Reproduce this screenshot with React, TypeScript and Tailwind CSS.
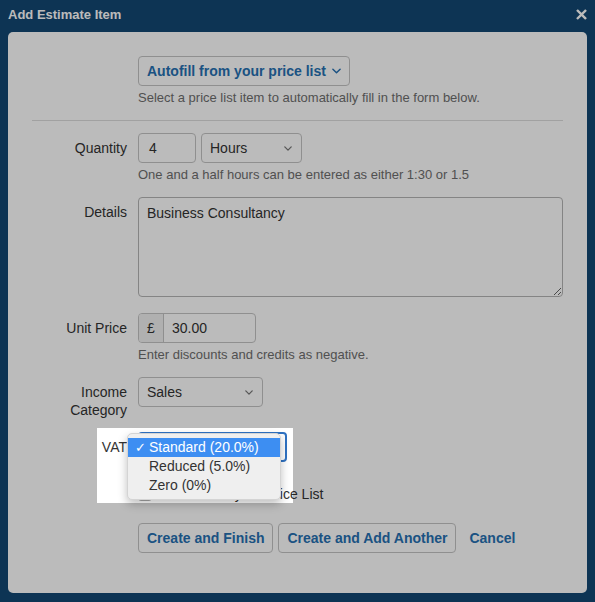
import React from 'react';

interface RowProps {
  label?: React.ReactNode;
  className?: string;
  children: React.ReactNode;
}

function Row({ label, className = '', children }: RowProps) {
  return (
    <div className={`flex ${className}`}>
      <div className="w-[95px] shrink-0 pt-[6px] text-right leading-[18px] text-[#333]">{label}</div>
      <div className="ml-[11px] min-w-0 flex-1">{children}</div>
    </div>
  );
}

function Chevron({ className }: { className?: string }) {
  return (
    <svg viewBox="0 0 10 6" className={className} fill="none" stroke="currentColor" strokeWidth="1.6" strokeLinecap="round" strokeLinejoin="round">
      <path d="M1 1l4 4 4-4" />
    </svg>
  );
}

function FakeSelect({ value, className = '' }: { value: string; className?: string }) {
  return (
    <div className={`flex h-[30px] items-center justify-between rounded-[4px] border border-[#c4c4c4] bg-white pl-[8px] pr-[9px] ${className}`}>
      <span>{value}</span>
      <Chevron className="h-[5px] w-[8px] text-[#777]" />
    </div>
  );
}

function Help({ children }: { children: React.ReactNode }) {
  return <p className="mt-[3px] text-[13px] leading-[18px] text-[#6e6e6e]">{children}</p>;
}

const vatOptions = [
  { label: 'Standard (20.0%)', selected: true },
  { label: 'Reduced (5.0%)', selected: false },
  { label: 'Zero (0%)', selected: false },
];

export default function App() {
  return (
    <div className="relative h-[602px] w-full overflow-hidden bg-[#134873] font-['Liberation_Sans',Arial,sans-serif] text-[14px] text-[#333]">
      {/* Modal header */}
      <div className="flex h-[32px] items-center justify-between px-[8px] pb-[3px]">
        <h1 className="text-[13px] font-bold text-white">Add Estimate Item</h1>
        <svg viewBox="0 0 12 12" className="h-[11px] w-[11px] text-white" fill="none" stroke="currentColor" strokeWidth="2.6" strokeLinecap="square">
          <path d="M2 2l8 8M10 2l-8 8" />
        </svg>
      </div>

      {/* Modal body */}
      <div className="mx-[8px] h-[561px] rounded-[5px] bg-white px-[24px] pt-[24px]">
        <Row>
          <button className="inline-flex h-[30px] items-center gap-[6px] rounded-[4px] border border-[#c4c4c4] bg-white px-[8px] font-bold text-[#2670b2]">
            Autofill from your price list
            <Chevron className="h-[6px] w-[9px]" />
          </button>
          <Help>Select a price list item to automatically fill in the form below.</Help>
        </Row>

        <div className="mt-[13px] h-px bg-[#dcdcdc]" />

        <Row label="Quantity" className="mt-[12px]">
          <div className="flex gap-[5px]">
            <div className="flex h-[30px] w-[58px] items-center rounded-[4px] border border-[#c4c4c4] bg-white pl-[10px]">4</div>
            <FakeSelect value="Hours" className="w-[101px]" />
          </div>
          <Help>One and a half hours can be entered as either 1:30 or 1.5</Help>
        </Row>

        <Row label="Details" className="mt-[13px]">
          <textarea
            readOnly
            defaultValue="Business Consultancy"
            className="block h-[100px] w-full rounded-[4px] border border-[#b4b4b4] bg-white px-[8px] py-[6px] leading-[18px] text-[#333] outline-none"
          />
        </Row>

        <Row label="Unit Price" className="mt-[16px]">
          <div className="flex h-[30px] w-[118px] overflow-hidden rounded-[4px] border border-[#c4c4c4] bg-white">
            <span className="flex w-[25px] items-center justify-center border-r border-[#c4c4c4] bg-[#f0f0f0]">£</span>
            <span className="flex items-center pl-[8px]">30.00</span>
          </div>
          <Help>Enter discounts and credits as negative.</Help>
        </Row>

        <Row
          label={
            <>
              Income
              <br />
              Category
            </>
          }
          className="mt-[13px]"
        >
          <FakeSelect value="Sales" className="w-[125px]" />
        </Row>

        <Row label="VAT" className="mt-[13px]">
          <div className="relative">
            <div className="h-[30px] w-[149px] rounded-[4px] border-2 border-[#2f72c2] bg-white" />
            {/* open native-style dropdown */}
            <div className="absolute left-[-11px] top-[1px] z-10 w-[154px] rounded-[5px] border border-[#d4d4d4] bg-[#efefef] py-[4px] shadow-[0_4px_10px_rgba(0,0,0,0.25)]">
              {vatOptions.map((opt) => (
                <div
                  key={opt.label}
                  className={`flex h-[19px] items-center ${opt.selected ? 'bg-[#3d8ef2] text-white' : 'text-[#333]'}`}
                >
                  <span className="w-[21px] pl-[7px] font-['DejaVu_Sans',sans-serif] text-[13px] font-bold leading-none">{opt.selected ? '✓' : ''}</span>
                  <span>{opt.label}</span>
                </div>
              ))}
            </div>
          </div>
        </Row>

        <Row className="mt-[16px]">
          <div className="flex items-center pt-[7px] leading-[18px]">
            <span className="h-[14px] w-[14px] rounded-[3px] border border-[#a8a8a8] bg-white" />
            <span className="ml-[8px]">Add item to your Price List</span>
          </div>
        </Row>

        <Row className="mt-[20px]">
          <div className="flex items-center gap-[5px]">
            <button className="h-[30px] rounded-[4px] border border-[#c4c4c4] bg-white px-[8px] font-bold text-[#2670b2]">Create and Finish</button>
            <button className="h-[30px] rounded-[4px] border border-[#c4c4c4] bg-white px-[8px] font-bold text-[#2670b2]">Create and Add Another</button>
            <a className="ml-[8px] font-bold text-[#2670b2]">Cancel</a>
          </div>
        </Row>
      </div>

      {/* spotlight over the VAT field */}
      <div className="pointer-events-none absolute left-[97px] top-[428px] h-[75px] w-[196px] shadow-[0_0_0_1200px_rgba(0,0,0,0.267)]" />
    </div>
  );
}
